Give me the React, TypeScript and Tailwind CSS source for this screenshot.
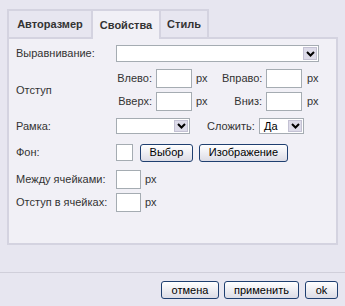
import React from 'react';

const Chevron = () => (
  <svg width="9" height="6" viewBox="0 0 9 6" className="block">
    <path d="M1 1 L4.5 4.5 L8 1" fill="none" stroke="#000" strokeWidth="2" />
  </svg>
);

const Select = ({ width, value }: { width: string; value?: string }) => (
  <div className={`flex h-full ${width} items-stretch border border-[#a5acb2] bg-white`}>
    <div className="flex flex-1 items-center pl-[4px] text-black">{value}</div>
    <div className="m-[1px] flex w-[14px] items-center justify-center border border-[#c3c1d3] bg-[#dddbe9]">
      <Chevron />
    </div>
  </div>
);

const Input = ({ width }: { width: string }) => (
  <div className={`h-full ${width} border border-[#a5acb2] bg-white`} />
);

const Button = ({ label, width }: { label: string; width: string }) => (
  <button
    className={`flex h-[18px] ${width} items-center justify-center rounded-[3px] border border-[#1f3f70] bg-gradient-to-b from-white to-[#dcdce6] text-black`}
  >
    {label}
  </button>
);

const Tab = ({ label, active, width, first }: { label: string; active?: boolean; width: string; first?: boolean }) => (
  <div
    className={`flex ${width} items-center justify-center border-2 border-b-0 border-[#d4d3e0] font-bold text-[#333] ${
      first ? '' : '-ml-[2px]'
    } ${active ? 'relative z-10 h-[30px] bg-[#f1f0f6]' : 'h-[28px] bg-[#e7e6f0]'}`}
  >
    {label}
  </div>
);

export default function App() {
  return (
    <div
      className="flex h-[306px] w-[345px] flex-col bg-[#e7e6f0] text-[11px] text-[#333]"
      style={{ fontFamily: '"Liberation Sans", Arial, sans-serif' }}
    >
      {/* tabs */}
      <div className="flex h-[28px] items-start px-[7px] mt-[9px]">
        <Tab label="Авторазмер" width="w-[86px]" first />
        <Tab label="Свойства" width="w-[70px]" active />
        <Tab label="Стиль" width="w-[50px]" />
      </div>

      {/* panel */}
      <div className="mx-[7px] h-[208px] border-2 border-[#d4d3e0] bg-[#f1f0f6] pl-[7px] pt-[6px]">
        <div className="flex h-[17px] items-center">
          <span className="w-[100px]">Выравнивание:</span>
          <Select width="w-[203px]" />
        </div>

        <div className="mt-[7px] flex items-center">
          <span className="w-[100px]">Отступ</span>
          <div className="flex flex-col gap-[4px]">
            <div className="flex h-[19px] items-center">
              <span className="w-[40px] text-right pr-[4px]">Влево:</span>
              <Input width="w-[36px]" />
              <span className="w-[30px] pl-[4px]">px</span>
              <span className="w-[44px] text-right pr-[4px]">Вправо:</span>
              <Input width="w-[36px]" />
              <span className="pl-[5px]">px</span>
            </div>
            <div className="flex h-[19px] items-center">
              <span className="w-[40px] text-right pr-[4px]">Вверх:</span>
              <Input width="w-[36px]" />
              <span className="w-[30px] pl-[4px]">px</span>
              <span className="w-[44px] text-right pr-[4px]">Вниз:</span>
              <Input width="w-[36px]" />
              <span className="pl-[5px]">px</span>
            </div>
          </div>
        </div>

        <div className="mt-[7px] flex h-[16px] items-center">
          <span className="w-[100px]">Рамка:</span>
          <Select width="w-[74px]" />
          <span className="ml-[17px] w-[52px]">Сложить:</span>
          <Select width="w-[45px]" value="Да" />
        </div>

        <div className="mt-[10px] flex h-[17px] items-center">
          <span className="w-[100px]">Фон:</span>
          <div className="h-[17px] w-[17px] border border-[#a5acb2] bg-white" />
          <div className="ml-[7px]">
            <Button label="Выбор" width="w-[53px]" />
          </div>
          <div className="ml-[6px]">
            <Button label="Изображение" width="w-[89px]" />
          </div>
        </div>

        <div className="mt-[9px] flex h-[19px] items-center">
          <span className="w-[100px]">Между ячейками:</span>
          <Input width="w-[25px]" />
          <span className="pl-[4px]">px</span>
        </div>

        <div className="mt-[4px] flex h-[19px] items-center">
          <span className="w-[100px]">Отступ в ячейках:</span>
          <Input width="w-[25px]" />
          <span className="pl-[4px]">px</span>
        </div>
      </div>

      {/* footer */}
      <div className="mt-[27px] border-t border-[#d0cfda] pt-[8px] pr-[7px] flex justify-end gap-[5px]">
        <Button label="отмена" width="w-[58px]" />
        <Button label="применить" width="w-[75px]" />
        <div className="ml-[1px]">
          <Button label="ok" width="w-[33px]" />
        </div>
      </div>
    </div>
  );
}
